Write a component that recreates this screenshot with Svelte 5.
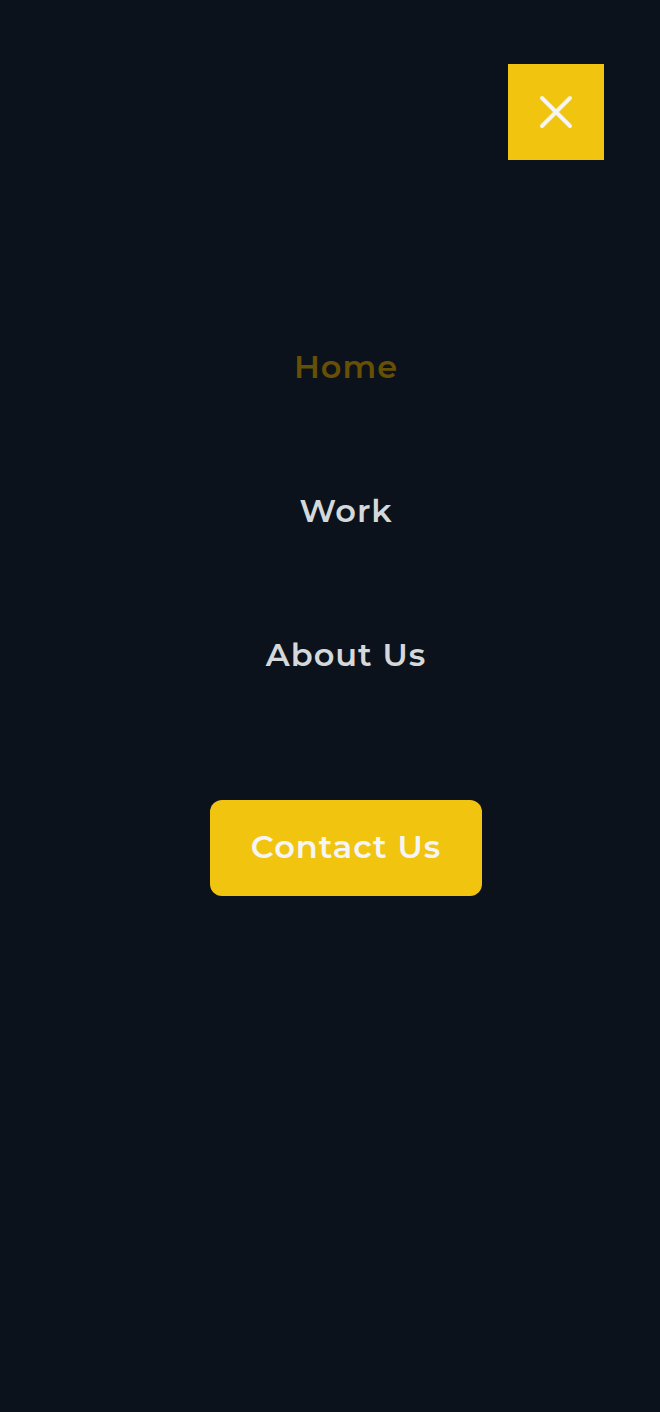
<script>
  const links = [
    { label: 'Home', href: '#home', active: true },
    { label: 'Work', href: '#work', active: false },
    { label: 'About Us', href: '#about', active: false }
  ];
</script>

<div class="menu">
  <header>
    <button class="close" type="button" aria-label="Close menu">
      <svg viewBox="0 0 48 48" aria-hidden="true">
        <path d="M10 10 38 38M38 10 10 38" />
      </svg>
    </button>
  </header>
  <nav aria-label="Main">
    <ul>
      {#each links as link}
        <li>
          <a href={link.href} class:active={link.active} aria-current={link.active ? 'page' : undefined}>{link.label}</a>
        </li>
      {/each}
    </ul>
    <a class="contact" href="#contact">Contact Us</a>
  </nav>
</div>

<style>
  :global(body) {
    margin: 0;
    background: #0b121b;
  }

  .menu {
    box-sizing: border-box;
    min-height: 100vh;
    padding: 64px 56px;
    background: #0b121b;
    font-family: Montserrat, Inter, sans-serif;
    font-size: 32px;
    font-weight: 600;
    line-height: 46px;
    letter-spacing: 1px;
  }

  header {
    display: flex;
    justify-content: flex-end;
  }

  .close {
    display: grid;
    place-items: center;
    width: 96px;
    height: 96px;
    padding: 0;
    border: 0;
    background: #f1c40f;
    cursor: pointer;
  }

  svg {
    width: 48px;
    height: 48px;
    fill: none;
    stroke: #f5f5f5;
    stroke-width: 4;
    stroke-linecap: round;
  }

  nav {
    display: flex;
    flex-direction: column;
    align-items: center;
    gap: 122px;
    padding: 184px 0 0 32px;
  }

  ul {
    display: flex;
    flex-direction: column;
    align-items: center;
    gap: 98px;
    margin: 0;
    padding: 0;
    list-style: none;
  }

  a {
    display: block;
    color: #d5d8da;
    text-decoration: none;
    white-space: nowrap;
  }

  .active {
    color: #665005;
  }

  .contact {
    padding: 24px 41px 26px;
    border-radius: 12px;
    background: #f1c40f;
    color: #f5f5f5;
  }
</style>
